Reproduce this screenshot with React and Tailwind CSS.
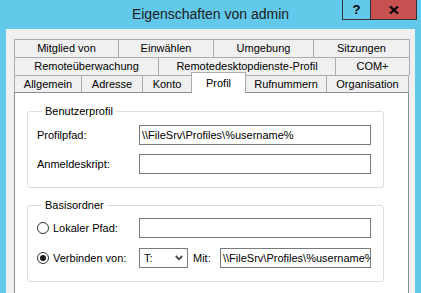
import React from 'react';

const rows = [
  [
    { label: 'Mitglied von', w: 'w-[105px]' },
    { label: 'Einwählen', w: 'w-[96px]' },
    { label: 'Umgebung', w: 'w-[101px]' },
    { label: 'Sitzungen', w: 'w-[97px]' },
  ],
  [
    { label: 'Remoteüberwachung', w: 'w-[145px]' },
    { label: 'Remotedesktopdienste-Profil', w: 'w-[178px]' },
    { label: 'COM+', w: 'w-[75px]' },
  ],
];

const lastRow = [
  { label: 'Allgemein', w: 'w-[68px]' },
  { label: 'Adresse', w: 'w-[62px]' },
  { label: 'Konto', w: 'w-[50px]' },
  { label: 'Profil', w: 'w-[56px]', active: true },
  { label: 'Rufnummern', w: 'w-[82px]' },
  { label: 'Organisation', w: 'w-[83px]' },
];

const PATH = '\\\\FileSrv\\Profiles\\%username%';

const Tab = ({ label, w, first, active, h = 'h-[18px]' }) => {
  if (active) {
    return (
      <div className={`${w} -ml-px -mt-[3px] h-[21px] relative z-10 bg-white border border-b-0 border-[#acacac] flex items-center justify-center`}>
        {label}
      </div>
    );
  }
  return (
    <div className={`${w} ${h} ${first ? '' : '-ml-px'} shrink-0 bg-[#f0f0f0] border border-b-0 border-[#acacac] flex items-center justify-center`}>
      {label}
    </div>
  );
};

const TextBox = ({ w, value }) => (
  <div className={`${w} h-[20px] border border-[#7a7a7a] bg-white pl-[2px] flex items-center overflow-hidden whitespace-nowrap`}>
    {value}
  </div>
);

const Radio = ({ checked }) => (
  <span className="w-[12px] h-[12px] rounded-full border border-[#333333] bg-white flex items-center justify-center shrink-0">
    {checked && <span className="w-[6px] h-[6px] rounded-full bg-[#1a1a1a]" />}
  </span>
);

export default function App() {
  return (
    <div className="w-[421px] h-[293px] overflow-hidden bg-[#62c9eb] flex flex-col font-['Liberation_Sans',Arial,sans-serif] text-[11px] text-black">
      {/* title bar */}
      <div className="h-[29px] flex shrink-0">
        <div className="w-[79px]" />
        <div className="flex-1 text-center text-[14px] leading-[28px] text-[#1b1b1b]">Eigenschaften von admin</div>
        <div className="w-[79px] pr-[4px] flex items-start">
          <div className="w-[29px] h-[20px] border border-t-0 border-[#333333] flex items-center justify-center text-[13px] font-bold leading-none">?</div>
          <div className="w-[47px] h-[20px] -ml-px border border-t-0 border-[#333333] bg-[#c75050] flex items-center justify-center">
            <svg width="10" height="8" viewBox="0 0 10 8">
              <path d="M1 0.5 L9 7.5 M9 0.5 L1 7.5" stroke="#000" strokeWidth="2.2" />
            </svg>
          </div>
        </div>
      </div>

      {/* window body */}
      <div className="flex-1 mx-[6px] bg-[#f0f0f0] pl-[8px] pr-[6px] pt-[10px]">
        {rows.map((row, i) => (
          <div key={i} className="flex h-[18px]">
            {row.map((t, j) => (
              <Tab key={t.label} {...t} first={j === 0} />
            ))}
          </div>
        ))}
        <div className="flex h-[17px]">
          {lastRow.map((t, j) => (
            <Tab key={t.label} {...t} first={j === 0} h="h-[17px]" />
          ))}
        </div>

        {/* tab page */}
        <div className="w-[395px] h-[220px] bg-white border border-[#898c95] pl-[12px] pt-[11px]">
          <fieldset className="w-[357px] border border-[#dcdcdc] rounded-[3px] pl-[9px] pr-[12px] pt-[7px] pb-[13px]">
            <legend className="ml-[5px] px-[3px] leading-[14px]">Benutzerprofil</legend>
            <div className="flex flex-col gap-[9px]">
              <div className="flex items-center">
                <span className="w-[102px]">Profilpfad:</span>
                <TextBox w="w-[232px]" value={PATH} />
              </div>
              <div className="flex items-center">
                <span className="w-[102px]">Anmeldeskript:</span>
                <TextBox w="w-[232px]" value="" />
              </div>
            </div>
          </fieldset>

          <fieldset className="mt-[10px] w-[357px] border border-[#dcdcdc] rounded-[3px] pl-[9px] pr-[12px] pt-[6px] pb-[13px]">
            <legend className="ml-[5px] px-[3px] leading-[14px]">Basisordner</legend>
            <div className="flex flex-col gap-[10px]">
              <div className="flex items-center">
                <label className="w-[102px] flex items-center gap-[4px]">
                  <Radio />
                  <span>Lokaler Pfad:</span>
                </label>
                <TextBox w="w-[232px]" value="" />
              </div>
              <div className="flex items-center">
                <label className="w-[102px] flex items-center gap-[4px]">
                  <Radio checked />
                  <span>Verbinden von:</span>
                </label>
                <div className="w-[49px] h-[20px] border border-[#7a7a7a] bg-white flex items-center justify-between pl-[4px] pr-[4px]">
                  <span>T:</span>
                  <svg width="8" height="6" viewBox="0 0 8 6">
                    <path d="M0.8 1 L4 4.3 L7.2 1" stroke="#444" strokeWidth="1.8" fill="none" />
                  </svg>
                </div>
                <span className="ml-[5px] w-[27px]">Mit:</span>
                <TextBox w="w-[151px]" value={PATH} />
              </div>
            </div>
          </fieldset>
        </div>
      </div>
    </div>
  );
}
